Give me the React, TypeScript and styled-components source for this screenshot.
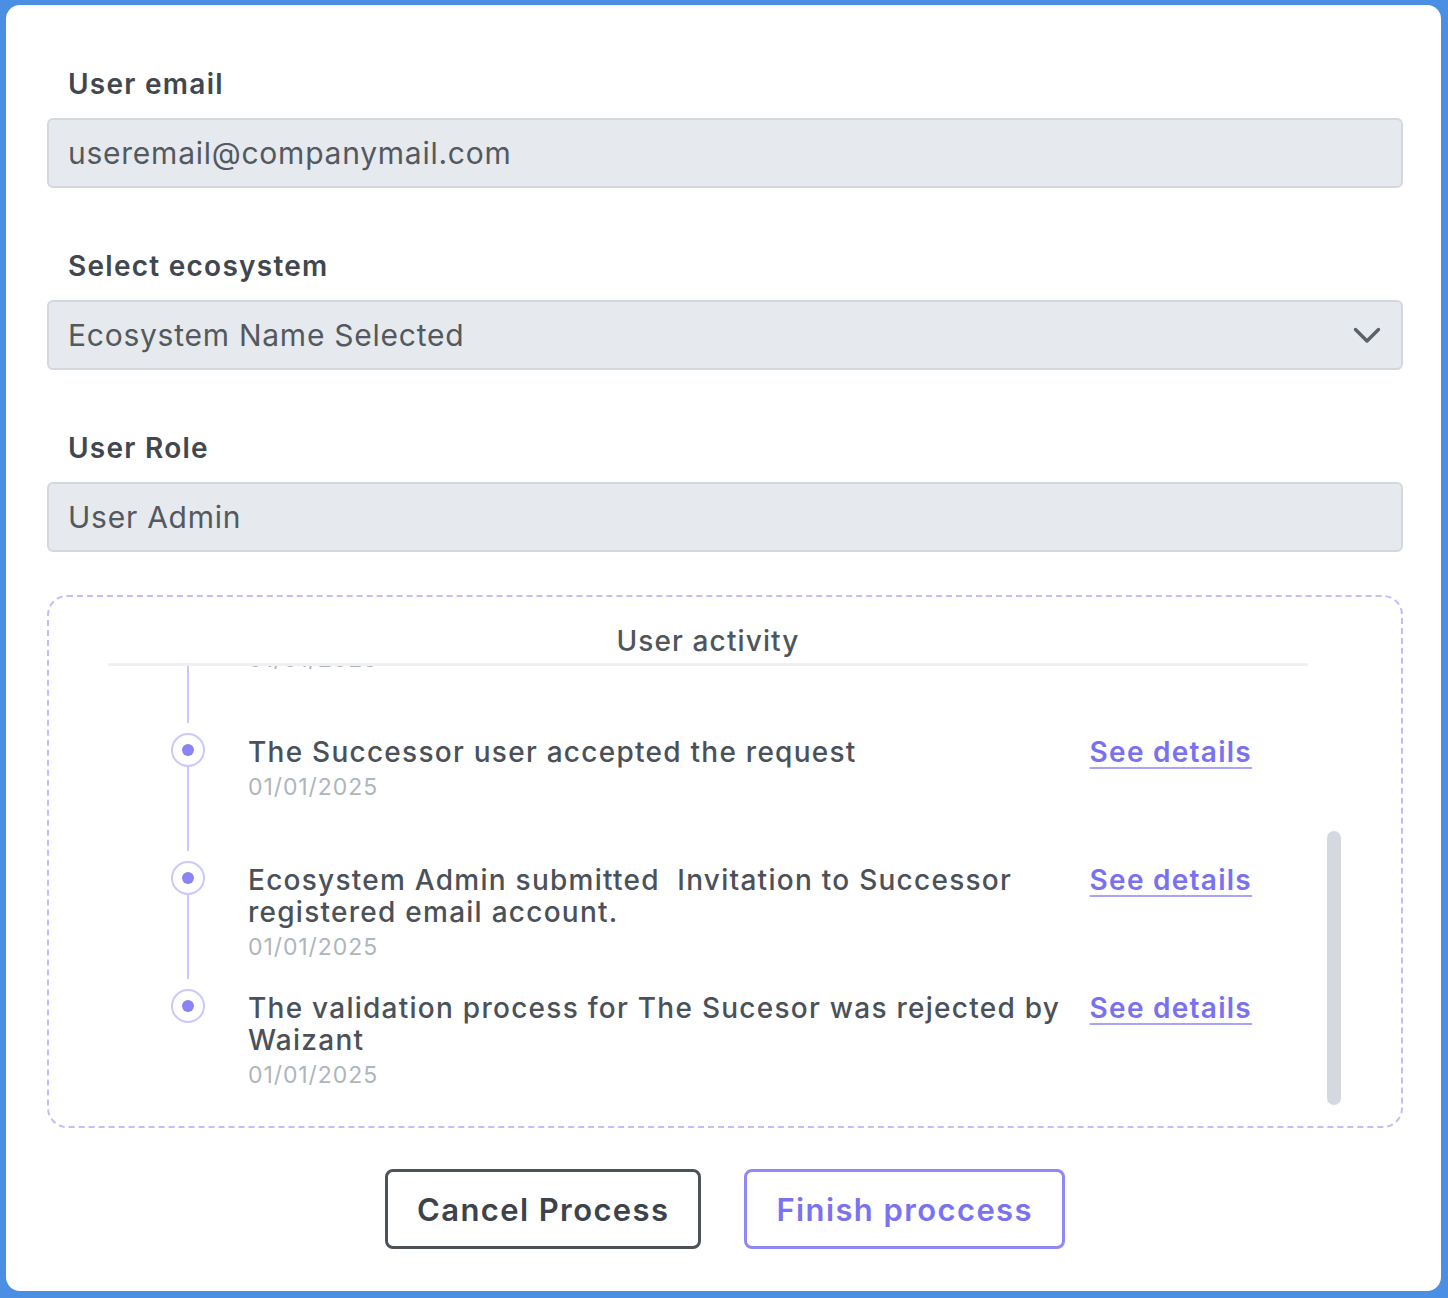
import React, { useLayoutEffect, useRef } from 'react';
import styled, { createGlobalStyle } from 'styled-components';

const Global = createGlobalStyle`
  html, body { margin: 0; padding: 0; background: #4a8fe3; }
  body { font-family: Inter, "Liberation Sans", sans-serif; -webkit-font-smoothing: antialiased; }
  *, *::before, *::after { box-sizing: border-box; }
`;

const Frame = styled.div`
  min-height: 100vh;
  padding: 5px 7px 8px 6px;
  display: flex;
`;

const Card = styled.main`
  flex: 1;
  background: #ffffff;
  border-radius: 14px;
  padding: 61px 38px 42px 41px;
  display: flex;
  flex-direction: column;
`;

const Fields = styled.div`
  display: flex;
  flex-direction: column;
  gap: 60px;
`;

const Field = styled.div`
  display: flex;
  flex-direction: column;
  gap: 16px;
`;

const Label = styled.label`
  padding-left: 21px;
  font-size: 28px;
  font-weight: 600;
  line-height: 36px;
  letter-spacing: 0.045em;
  color: #41474e;
`;

const InputBox = styled.div`
  height: 70px;
  background: #e6e9ed;
  border: 2px solid #d3d8de;
  border-radius: 6px;
  display: flex;
  align-items: center;
  justify-content: space-between;
  padding: 0 20px 0 19px;
  font-size: 30px;
  letter-spacing: 0.025em;
  color: #53595f;
`;

const Chevron = styled.svg`
  width: 28px;
  height: 17px;
  flex: none;
`;

const ActivityBox = styled.section`
  margin-top: 43px;
  height: 533px;
  border: 2px dashed #c3bdfa;
  border-radius: 20px;
  padding: 26px 60px 13px 59px;
`;

const ActivityHeader = styled.h2`
  margin: 0 33px 0 0;
  padding-bottom: 4px;
  border-bottom: 3px solid #eef0f3;
  text-align: center;
  font-size: 28px;
  font-weight: 500;
  line-height: 36px;
  letter-spacing: 0.04em;
  color: #4f555c;
`;

const ScrollArea = styled.div`
  position: relative;
  height: 447px;
`;

const Viewport = styled.div`
  height: 100%;
  overflow: hidden;
`;

const Thumb = styled.div`
  position: absolute;
  right: 0;
  top: 165px;
  width: 14px;
  height: 274px;
  border-radius: 7px;
  background: #d3d9df;
`;

const TimelineList = styled.ul`
  list-style: none;
  margin: 0;
  padding: 0 89px 0 63px;
`;

const Item = styled.li<{ $last?: boolean }>`
  display: grid;
  grid-template-columns: 57px 1fr auto;
  column-gap: 20px;
  height: ${p => (p.$last ? 'auto' : '128px')};
  padding-bottom: ${p => (p.$last ? '40px' : '0')};
`;

const Rail = styled.div`
  width: 34px;
  display: flex;
  flex-direction: column;
  align-items: center;
  height: 100%;
`;

const Dot = styled.span`
  width: 34px;
  height: 34px;
  flex: none;
  border-radius: 50%;
  border: 2.5px solid #cdc8fc;
  display: flex;
  align-items: center;
  justify-content: center;
  &::after {
    content: '';
    width: 12px;
    height: 12px;
    border-radius: 50%;
    background: #8a83f5;
  }
`;

const Connector = styled.span<{ $hidden?: boolean }>`
  flex: 1;
  width: 2px;
  margin-bottom: 10px;
  background: ${p => (p.$hidden ? 'transparent' : '#cbc6fb')};
`;

const ItemBody = styled.div`
  padding-top: 3px;
`;

const ItemTitle = styled.div`
  font-size: 28px;
  font-weight: 500;
  line-height: 32px;
  letter-spacing: 0.045em;
  color: #4b5158;
`;

const ItemDate = styled.div`
  margin-top: 3px;
  font-size: 23px;
  line-height: 32px;
  letter-spacing: 0.04em;
  color: #afb5bc;
`;

const DetailsLink = styled.a`
  margin-top: 3px;
  font-size: 28px;
  font-weight: 600;
  line-height: 32px;
  letter-spacing: 0.045em;
  color: #7a71f1;
  text-decoration: underline;
  text-decoration-color: #aaa4f8;
  text-decoration-thickness: 2px;
  text-underline-offset: 5px;
  cursor: pointer;
`;

const Actions = styled.div`
  margin-top: 41px;
  display: flex;
  justify-content: center;
  gap: 43px;
`;

const ActionButton = styled.button<{ $variant: 'neutral' | 'primary' }>`
  height: 80px;
  padding: 0 29px;
  background: #ffffff;
  border: 3px solid ${p => (p.$variant === 'primary' ? '#8f88f6' : '#4b5259')};
  border-radius: 8px;
  font-family: inherit;
  font-size: 31px;
  font-weight: 600;
  letter-spacing: 0.045em;
  color: ${p => (p.$variant === 'primary' ? '#7b72f2' : '#3c434a')};
  cursor: pointer;
`;

type Activity = { title: string; date: string };

const activities: Activity[] = [
  { title: 'Ecosystem Admin created the succession request', date: '01/01/2025' },
  { title: 'The Successor user received the request', date: '01/01/2025' },
  { title: 'The Successor user accepted the request', date: '01/01/2025' },
  {
    title: 'Ecosystem Admin submitted\u00a0 Invitation to Successor registered email account.',
    date: '01/01/2025',
  },
  { title: 'The validation process for The Sucesor was rejected by Waizant', date: '01/01/2025' },
];

function ChevronDown() {
  return (
    <Chevron viewBox="0 0 28 17" fill="none">
      <path d="M2.5 2.5 L14 14 L25.5 2.5" stroke="#5b6168" strokeWidth="3.4" strokeLinecap="round" strokeLinejoin="round" />
    </Chevron>
  );
}

export default function App() {
  const viewportRef = useRef<HTMLDivElement>(null);

  useLayoutEffect(() => {
    if (viewportRef.current) viewportRef.current.scrollTop = 189;
  }, []);

  return (
    <>
      <Global />
      <Frame>
        <Card>
          <Fields>
            <Field>
              <Label>User email</Label>
              <InputBox>useremail@companymail.com</InputBox>
            </Field>
            <Field>
              <Label>Select ecosystem</Label>
              <InputBox>
                Ecosystem Name Selected
                <ChevronDown />
              </InputBox>
            </Field>
            <Field>
              <Label>User Role</Label>
              <InputBox>User Admin</InputBox>
            </Field>
          </Fields>

          <ActivityBox>
            <ActivityHeader>User activity</ActivityHeader>
            <ScrollArea>
              <Viewport ref={viewportRef}>
                <TimelineList>
                  {activities.map((a, i) => {
                    const last = i === activities.length - 1;
                    return (
                      <Item key={i} $last={last}>
                        <Rail>
                          <Dot />
                          <Connector $hidden={last} />
                        </Rail>
                        <ItemBody>
                          <ItemTitle>{a.title}</ItemTitle>
                          <ItemDate>{a.date}</ItemDate>
                        </ItemBody>
                        <DetailsLink>See details</DetailsLink>
                      </Item>
                    );
                  })}
                </TimelineList>
              </Viewport>
              <Thumb />
            </ScrollArea>
          </ActivityBox>

          <Actions>
            <ActionButton $variant="neutral">Cancel Process</ActionButton>
            <ActionButton $variant="primary">Finish proccess</ActionButton>
          </Actions>
        </Card>
      </Frame>
    </>
  );
}
